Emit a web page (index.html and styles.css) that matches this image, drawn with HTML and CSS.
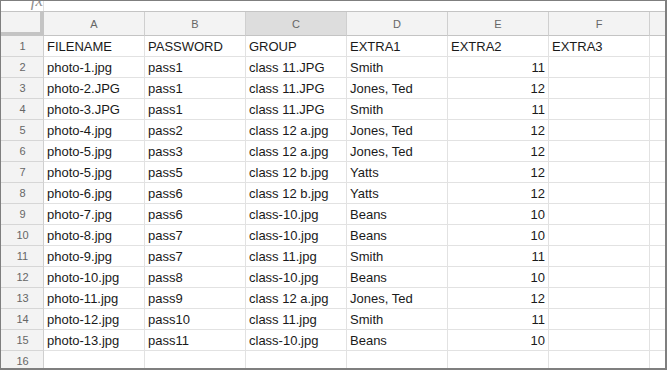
FILE: index.html
```html
<!DOCTYPE html>
<html>
<head>
<meta charset="utf-8">
<link rel="stylesheet" href="styles.css">
</head>
<body>
<div class="frame">
  <div class="fbar">
    <div class="fx"><span>fx</span></div>
    <div class="finput"></div>
  </div>
  <div class="grid">
    <div class="corner"></div>
    <div class="ch">A</div><div class="ch">B</div><div class="ch sel">C</div><div class="ch">D</div><div class="ch">E</div><div class="ch">F</div><div class="ch last"></div>

    <div class="rh">1</div><div class="c">FILENAME</div><div class="c">PASSWORD</div><div class="c">GROUP</div><div class="c">EXTRA1</div><div class="c">EXTRA2</div><div class="c">EXTRA3</div><div class="c last"></div>
    <div class="rh">2</div><div class="c">photo-1.jpg</div><div class="c">pass1</div><div class="c">class 11.JPG</div><div class="c">Smith</div><div class="c num">11</div><div class="c"></div><div class="c last"></div>
    <div class="rh">3</div><div class="c">photo-2.JPG</div><div class="c">pass1</div><div class="c">class 11.JPG</div><div class="c">Jones, Ted</div><div class="c num">12</div><div class="c"></div><div class="c last"></div>
    <div class="rh">4</div><div class="c">photo-3.JPG</div><div class="c">pass1</div><div class="c">class 11.JPG</div><div class="c">Smith</div><div class="c num">11</div><div class="c"></div><div class="c last"></div>
    <div class="rh">5</div><div class="c">photo-4.jpg</div><div class="c">pass2</div><div class="c">class 12 a.jpg</div><div class="c">Jones, Ted</div><div class="c num">12</div><div class="c"></div><div class="c last"></div>
    <div class="rh">6</div><div class="c">photo-5.jpg</div><div class="c">pass3</div><div class="c">class 12 a.jpg</div><div class="c">Jones, Ted</div><div class="c num">12</div><div class="c"></div><div class="c last"></div>
    <div class="rh">7</div><div class="c">photo-5.jpg</div><div class="c">pass5</div><div class="c">class 12 b.jpg</div><div class="c">Yatts</div><div class="c num">12</div><div class="c"></div><div class="c last"></div>
    <div class="rh">8</div><div class="c">photo-6.jpg</div><div class="c">pass6</div><div class="c">class 12 b.jpg</div><div class="c">Yatts</div><div class="c num">12</div><div class="c"></div><div class="c last"></div>
    <div class="rh">9</div><div class="c">photo-7.jpg</div><div class="c">pass6</div><div class="c">class-10.jpg</div><div class="c">Beans</div><div class="c num">10</div><div class="c"></div><div class="c last"></div>
    <div class="rh">10</div><div class="c">photo-8.jpg</div><div class="c">pass7</div><div class="c">class-10.jpg</div><div class="c">Beans</div><div class="c num">10</div><div class="c"></div><div class="c last"></div>
    <div class="rh">11</div><div class="c">photo-9.jpg</div><div class="c">pass7</div><div class="c">class 11.jpg</div><div class="c">Smith</div><div class="c num">11</div><div class="c"></div><div class="c last"></div>
    <div class="rh">12</div><div class="c">photo-10.jpg</div><div class="c">pass8</div><div class="c">class-10.jpg</div><div class="c">Beans</div><div class="c num">10</div><div class="c"></div><div class="c last"></div>
    <div class="rh">13</div><div class="c">photo-11.jpg</div><div class="c">pass9</div><div class="c">class 12 a.jpg</div><div class="c">Jones, Ted</div><div class="c num">12</div><div class="c"></div><div class="c last"></div>
    <div class="rh">14</div><div class="c">photo-12.jpg</div><div class="c">pass10</div><div class="c">class 11.jpg</div><div class="c">Smith</div><div class="c num">11</div><div class="c"></div><div class="c last"></div>
    <div class="rh">15</div><div class="c">photo-13.jpg</div><div class="c">pass11</div><div class="c">class-10.jpg</div><div class="c">Beans</div><div class="c num">10</div><div class="c"></div><div class="c last"></div>
    <div class="rh">16</div><div class="c"></div><div class="c"></div><div class="c"></div><div class="c"></div><div class="c"></div><div class="c"></div><div class="c last"></div>
  </div>
</div>
</body>
</html>
```

FILE: styles.css
```css
html, body {
  margin: 0;
  padding: 0;
  background: #ffffff;
}

.frame {
  width: 667px;
  height: 370px;
  box-sizing: border-box;
  border-top: 1px solid #7f7f7f;
  border-left: 1px solid #7f7f7f;
  border-right: 2px solid #7f7f7f;
  border-bottom: 2px solid #7f7f7f;
  overflow: hidden;
  background: #ffffff;
  font-family: "Liberation Sans", Arial, sans-serif;
}

.fbar {
  display: flex;
  height: 10px;
  border-bottom: 1px solid #c4c4c4;
  overflow: hidden;
}

.fx {
  width: 42px;
  flex: none;
  border-right: 1px solid #e0e0e0;
  overflow: hidden;
  text-align: right;
}

.fx span {
  display: block;
  margin-top: -9px;
  padding-right: 0px;
  font-family: "Liberation Serif", serif;
  font-style: italic;
  font-size: 17px;
  line-height: 18px;
  color: #8f8f8f;
}

.finput {
  flex: 1;
}

.grid {
  display: grid;
  grid-template-columns: 43px repeat(6, 101px) 1fr;
  grid-template-rows: 24px repeat(16, 21px);
}

.corner {
  background: #f3f3f3;
  box-sizing: border-box;
  border-right: 4px solid #c4c4c4;
  border-bottom: 4px solid #c4c4c4;
}

.ch {
  background: #f3f3f3;
  box-sizing: border-box;
  border-right: 1px solid #cfcfcf;
  border-bottom: 1px solid #c4c4c4;
  font-size: 11px;
  color: #666666;
  display: flex;
  align-items: center;
  justify-content: center;
}

.ch.sel {
  background: #dddddd;
}

.rh {
  background: #f3f3f3;
  box-sizing: border-box;
  border-right: 1px solid #cfcfcf;
  border-bottom: 1px solid #d6d6d6;
  font-size: 11px;
  color: #666666;
  display: flex;
  align-items: center;
  justify-content: center;
  padding-left: 1px;
}

.c {
  box-sizing: border-box;
  border-right: 1px solid #e2e2e2;
  border-bottom: 1px solid #e2e2e2;
  font-size: 13px;
  color: #1a1a1a;
  padding: 0 3px;
  display: flex;
  align-items: center;
  white-space: nowrap;
  overflow: hidden;
}

.c.num {
  justify-content: flex-end;
}

.last {
  border-right: none;
}
```
